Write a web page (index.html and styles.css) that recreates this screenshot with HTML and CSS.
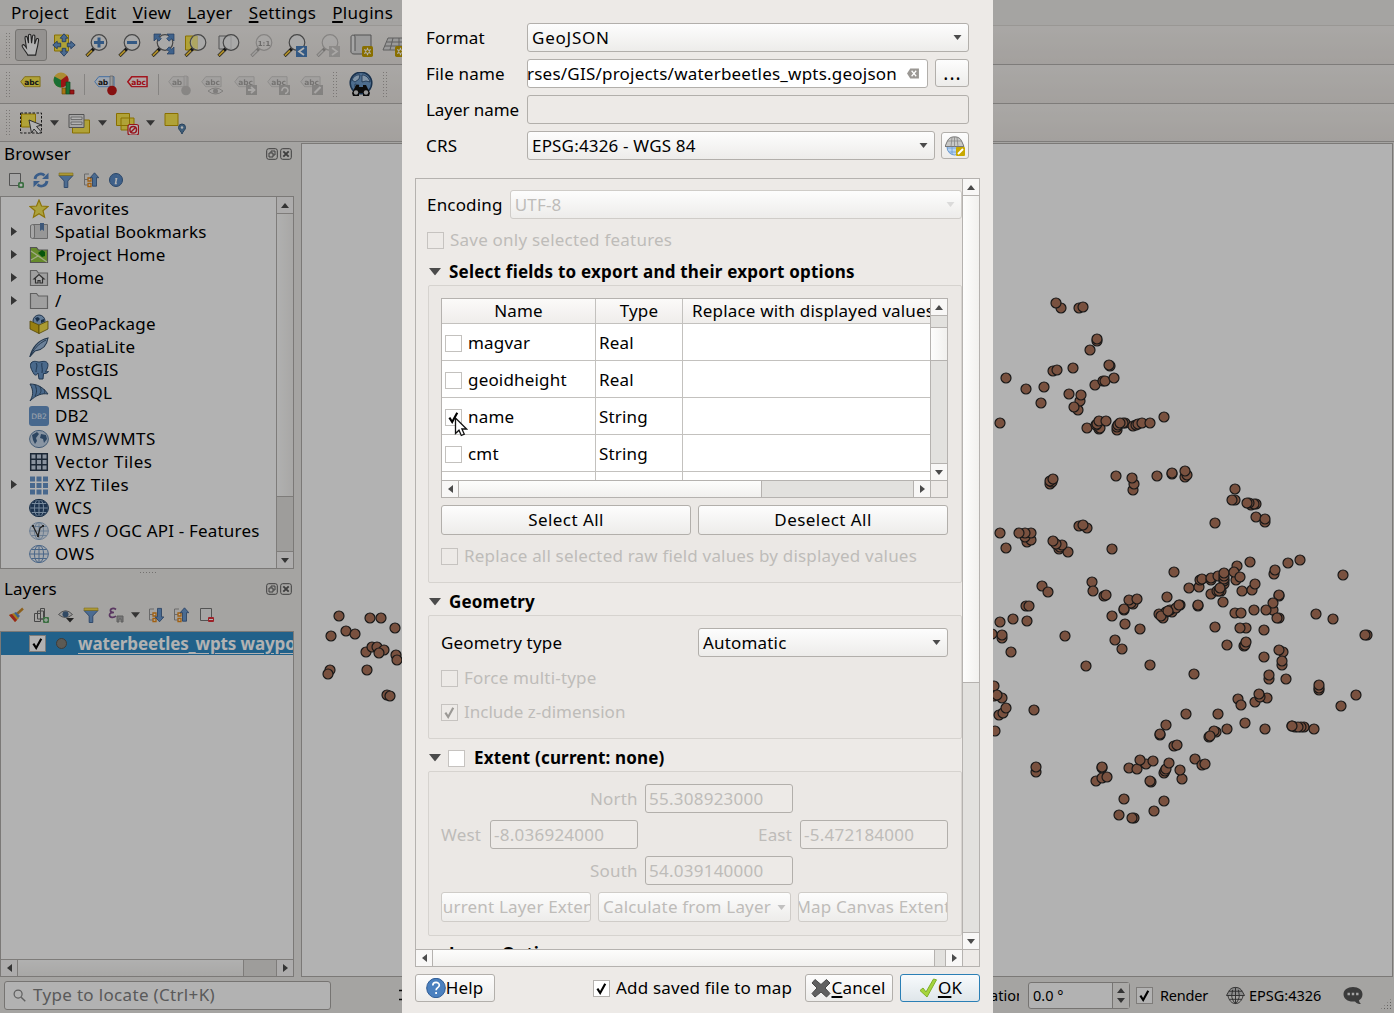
FILE: index.html
```html
<!DOCTYPE html>
<html lang="en">
<head>
<meta charset="utf-8">
<title>QGIS - Save Vector Layer as</title>
<link rel="stylesheet" href="styles.css">
</head>
<body>
<svg class="defs" aria-hidden="true">
  <defs>
    <symbol id="lens" viewBox="0 0 24 24"><path d="M9 15.5 1.5 23" stroke="#222" stroke-width="3.2"/><path d="M7 17.5 1.8 22.6" stroke="#f5c73a" stroke-width="2"/><circle cx="14" cy="9.5" r="7.8" fill="#f4f4f4" fill-opacity=".75" stroke="#666" stroke-width="1.2"/></symbol>
    <symbol id="up" viewBox="0 0 8 5"><path d="M0 5 4 0l4 5z" fill="#4b4b4b"/></symbol>
    <symbol id="down" viewBox="0 0 8 5"><path d="M0 0h8L4 5z" fill="#4b4b4b"/></symbol>
    <symbol id="left" viewBox="0 0 5 8"><path d="M5 0v8L0 4z" fill="#4b4b4b"/></symbol>
    <symbol id="right" viewBox="0 0 5 8"><path d="M0 0v8l5-4z" fill="#4b4b4b"/></symbol>
    <symbol id="check" viewBox="0 0 14 16"><path d="M2.6 8.2 5.6 12.8 11 3" fill="none" stroke="currentColor" stroke-width="2.3"/></symbol>
    <symbol id="tag" viewBox="0 0 22 12"><path d="M5 .7h16v10.6H5L.8 6z"/></symbol>
    <symbol id="folder" viewBox="0 0 20 20"><path d="M1.5 17.5v-15h6l2 2.5h9v12.5z" fill="#e6e6e6" stroke="#8a8a8a" stroke-width="1.2"/></symbol>
    <symbol id="globe" viewBox="0 0 20 20"><ellipse cx="10" cy="10" rx="9.4" ry="8.6"/><ellipse cx="10" cy="10" rx="4.6" ry="8.6" fill="none"/><path d="M10 1.4v17.2M.6 10h18.8M2.3 5.5h15.4M2.3 14.5h15.4" fill="none"/></symbol>
    <symbol id="funnel" viewBox="0 0 16 16"><path d="M1 3.5h14L9.800 9v6.500h-3.600V9z" fill="#6d9bd0" stroke="#45699a"/><path d="M1 1h14v2.500H1z" fill="#f7dc4c" stroke="#b29a2a" stroke-width=".6"/></symbol>
    <symbol id="treeicon" viewBox="0 0 16 16"><path d="M6 2H1.500v11H6M1.500 7.500H6" fill="none" stroke="#999"/><path d="M5 6h3v3H5zM5 11.500h3v3H5z" fill="#fff" stroke="#e88a18" stroke-width="1.300"/></symbol>
    <symbol id="dockfloat" viewBox="0 0 12 12"><rect x=".7" y=".7" width="10.600" height="10.600" rx="2" fill="none" stroke="#5a5a5a"/><path d="M5 5V3h4v4H7M3 5h4v4H3z" fill="none" stroke="#5a5a5a"/></symbol>
    <symbol id="dockclose" viewBox="0 0 12 12"><rect x=".7" y=".7" width="10.600" height="10.600" rx="2" fill="none" stroke="#5a5a5a"/><path d="m3.300 3.300 5.400 5.400m0-5.400L3.300 8.700" stroke="#5a5a5a" stroke-width="1.900"/></symbol>
    <symbol id="badge" viewBox="0 0 10 10"><rect width="10" height="10" rx="1.500" fill="#c4a000"/><path d="M5 1.500v7M2 3.200l6 3.600M8 3.200 2 6.800" stroke="#fff" stroke-width="1.100"/><circle cx="5" cy="5" r="1.700" fill="#c4a000" stroke="#fff" stroke-width=".9"/></symbol>
  </defs>
</svg>

<div class="window">
  <nav class="menubar">
    <span>Pro<u>j</u>ect</span><span><u>E</u>dit</span><span><u>V</u>iew</span><span><u>L</u>ayer</span><span><u>S</u>ettings</span><span><u>P</u>lugins</span>
  </nav>

  <div class="toolbar">
    <i class="handle"></i>
    <span class="tool pressed"><svg viewBox="0 0 24 26"><path d="M8.500 24c-1-3-5-6.500-6-9.500-.6-2 1.500-2.500 2.600-1L7 16 5.500 5.500C5.300 3.300 7.600 3 8 5l1.300 6L9.200 3c0-2.200 2.600-2.200 2.800 0l.6 8 1-7.500c.3-2 2.700-1.700 2.600.3L16 12l1.700-5c.7-1.800 2.800-1 2.500.8-.5 3.700-1 7.500-2.200 11L17 24z" fill="#fff" stroke="#333" stroke-width="1.200"/></svg></span>
    <span class="tool"><svg viewBox="0 0 24 24"><path d="M2.500 2h14v16h-14z" fill="#fce94f" stroke="#c4a000"/><path d="m12 .8 3.800 4.400h-2v3.500h-3.600V5.200h-2zM12 23.200l3.800-4.400h-2v-3.500h-3.600v3.500h-2zM.8 12l4.400-3.800v2h3.500v3.600H5.200v2zM23.200 12l-4.400-3.800v2h-3.500v3.600h3.500v2z" fill="#6b9ad0" stroke="#335788" stroke-width=".9"/></svg></span>
    <span class="tool"><svg viewBox="0 0 24 24"><use href="#lens"/><path d="M14 4.500v10M9 9.500h10" stroke="#4a80bd" stroke-width="3"/></svg></span>
    <span class="tool"><svg viewBox="0 0 24 24"><use href="#lens"/><path d="M9 9.500h10" stroke="#4a80bd" stroke-width="3"/></svg></span>
    <span class="tool"><svg viewBox="0 0 24 24"><use href="#lens"/><path d="M3 1h7L7.800 3.200l2.500 2.500-2.500 2.500-2.500-2.500L3 8zM23 1h-7l2.200 2.200-2.500 2.500 2.500 2.500 2.500-2.500L23 8zM23 21h-7l2.200-2.200-2.500-2.500 2.500-2.500 2.500 2.500L23 14z" fill="#5b8dc7" stroke="#335788" stroke-width=".7"/></svg></span>
    <span class="tool"><svg viewBox="0 0 24 24"><path d="M1.500 3h12v14h-12z" fill="#fce94f" stroke="#c4a000"/><use href="#lens"/><path d="M13.500 3v13A6.500 6.500 0 0 1 8 7l1.500-4z" fill="#fce94f" opacity=".5"/></svg></span>
    <span class="tool"><svg viewBox="0 0 24 24"><path d="M2 3h12v13H2z" fill="#eee" stroke="#777"/><use href="#lens"/></svg></span>
    <span class="tool off"><svg viewBox="0 0 24 24"><use href="#lens"/><text x="14" y="12.500" class="onetoone">1:1</text></svg></span>
    <span class="tool"><svg viewBox="0 0 24 24"><use href="#lens"/><path d="M13 13h11v11H13z" fill="#4a80bd"/><path d="m21 15-5 3.500 5 3.500" fill="none" stroke="#fff" stroke-width="1.700"/></svg></span>
    <span class="tool off"><svg viewBox="0 0 24 24"><use href="#lens"/><path d="M13 13h11v11H13z" fill="#888"/><path d="m16 15 5 3.500-5 3.500" fill="none" stroke="#fff" stroke-width="1.700"/></svg></span>
    <span class="tool"><svg viewBox="0 0 24 24"><path d="M5 2h17v19H5c-2 0-3-1-3-2.500S3 17 5 17z" fill="#ddd" stroke="#777"/><path d="M2 18.500V4c0-2.500 4-2.500 4 0v14" fill="#eee" stroke="#777"/><use href="#badge" x="13" y="13" width="11" height="11"/></svg></span>
    <span class="tool"><svg viewBox="0 0 24 24"><path d="M6 5h17v12H1z" fill="#ddd" stroke="#888"/><path d="M4.500 9H23M3 13h20M11 5 8 17M17 5v12" stroke="#888"/><use href="#badge" x="13" y="13" width="11" height="11"/></svg></span>
  </div>

  <div class="toolbar">
    <i class="handle"></i>
    <span class="tool"><svg viewBox="0 0 24 24"><use href="#tag" x="1" y="4" width="21" height="11.500" fill="#fce94f" stroke="#b89c20"/><text x="12.500" y="12.500" class="abc">abc</text></svg></span>
    <span class="tool"><svg viewBox="0 0 24 24"><circle cx="9" cy="8" r="7.500" fill="#f7c948"/><path d="M9 8 2.500 4.500A7.500 7.500 0 0 0 9 15.500z" fill="#24a04a"/><path d="M9 8V15.500A7.500 7.500 0 0 0 15 3.500z" fill="#dc1f1f"/><path d="M10 16h4v6h-4z" fill="#f2a71b" stroke="#9c6a0a" stroke-width=".7"/><path d="M14 10h4v12h-4z" fill="#24a04a" stroke="#14692c" stroke-width=".7"/><path d="M18 18h4v4h-4z" fill="#dc1f1f" stroke="#8a1010" stroke-width=".7"/></svg></span>
    <i class="sep"></i>
    <span class="tool"><svg viewBox="0 0 24 24"><use href="#tag" x="1" y="4" width="21" height="11.500" fill="#e4eefb" stroke="#5a9be8"/><text x="10" y="12.500" class="abc">ab</text><path d="M17 4h3v12h-3z" fill="#ddd" stroke="#888" stroke-width=".7"/><circle cx="19" cy="18.500" r="4.800" fill="#c01818"/></svg></span>
    <span class="tool"><svg viewBox="0 0 24 24"><use href="#tag" x="1" y="4" width="21" height="11.500" fill="#fdecec" stroke="#e8202c" stroke-width="1.600"/><text x="12.500" y="12.500" class="abc red">abc</text></svg></span>
    <i class="sep"></i>
    <span class="tool off"><svg viewBox="0 0 24 24"><use href="#tag" x="1" y="4" width="21" height="11.500" fill="#ddd" stroke="#888"/><text x="10" y="12.500" class="abc">ab</text><path d="M17 4h3v12h-3z" fill="#ccc" stroke="#777" stroke-width=".7"/><circle cx="19" cy="18.500" r="4.800" fill="#777"/></svg></span>
    <span class="tool off"><svg viewBox="0 0 24 24"><use href="#tag" x="1" y="4" width="21" height="11.500" fill="#ddd" stroke="#888"/><text x="12.500" y="12.500" class="abc">abc</text><path d="M8 19q7.500-6 15 0-7.500 6-15 0z" fill="#eee" stroke="#555"/><circle cx="15.500" cy="19" r="2.500" fill="#555"/></svg></span>
    <span class="tool off"><svg viewBox="0 0 24 24"><use href="#tag" x="1" y="4" width="21" height="11.500" fill="#ddd" stroke="#888"/><text x="12.500" y="12.500" class="abc">abc</text><path d="M13 13h11v10H13z" fill="#666"/><path d="M15 18h6m-3-3 3.500 3-3.500 3" fill="none" stroke="#fff" stroke-width="1.800"/></svg></span>
    <span class="tool off"><svg viewBox="0 0 24 24"><use href="#tag" x="1" y="4" width="21" height="11.500" fill="#ddd" stroke="#888"/><text x="12.500" y="12.500" class="abc">abc</text><path d="M13 13h11v10H13z" fill="#666"/><path d="M16 19a3 3 0 1 1 3 2.500" fill="none" stroke="#fff" stroke-width="1.600"/></svg></span>
    <span class="tool off"><svg viewBox="0 0 24 24"><use href="#tag" x="1" y="4" width="21" height="11.500" fill="#ddd" stroke="#888"/><text x="12.500" y="12.500" class="abc">abc</text><path d="M13 13h11v10H13z" fill="#666"/><path d="m15.500 21 6-6" stroke="#fff" stroke-width="2.200"/></svg></span>
    <i class="handle wide"></i>
    <span class="tool"><svg viewBox="0 0 24 24"><circle cx="12" cy="11" r="10.800" fill="#6f9ccc" stroke="#26486f" stroke-width="1.500"/><path d="M3 8c2-4 5-5.500 8-5l-1 4-4 3zM13 3c4 0 7 3 8 7l-4-1-4 1zM6 12l4 1-1 4-3-2z" fill="#b9d4ee" stroke="#26486f" stroke-width=".8"/><path d="M7 13h3v2h4v-2h3l4 8-1 3h-6v-3h-4v3H4l-1-3z" fill="#111"/><circle cx="7" cy="20.500" r="2.200" fill="#ddd"/><circle cx="17" cy="20.500" r="2.200" fill="#ddd"/></svg></span>
    <i class="handle wide"></i>
  </div>

  <div class="toolbar">
    <i class="handle"></i>
    <span class="tool"><svg viewBox="0 0 24 24"><path d="M2.500 3h14v13h-14z" fill="#fce94f" stroke="#c4a000"/><path d="M1.500 2h21v20h-21z" fill="none" stroke="#222" stroke-dasharray="2.500 1.500"/><path d="m10 9 12.500 5-5 1.500 4.500 5-2.500 2.500-4.500-5-2.500 4z" fill="#fff" stroke="#444"/></svg></span>
    <svg class="menuarrow"><use href="#down"/></svg>
    <span class="tool"><svg viewBox="0 0 24 24"><path d="M5.500 9h17v13h-17z" fill="#fce94f" stroke="#c4a000"/><path d="M2 3.500h15v13H2z" fill="#eee" stroke="#777"/><path d="M4 6h11v2.500H4zM4 11h11v2.500H4z" fill="#fff" stroke="#888" stroke-width=".8"/></svg></span>
    <svg class="menuarrow"><use href="#down"/></svg>
    <span class="tool"><svg viewBox="0 0 24 24"><path d="M1.500 2.500h13v12h-13zM6 7h13v12H6z" fill="#fce94f" stroke="#c4a000"/><rect x="13" y="13.500" width="10.500" height="10.500" rx="2" fill="#fff" stroke="#d81f2a" stroke-width="1.200"/><circle cx="18.200" cy="18.700" r="3.300" fill="none" stroke="#d81f2a" stroke-width="1.500"/><path d="m16 21 4.500-4.500" stroke="#d81f2a" stroke-width="1.500"/></svg></span>
    <svg class="menuarrow"><use href="#down"/></svg>
    <span class="tool"><svg viewBox="0 0 24 24"><path d="M2 2.500h13v12H2z" fill="#fce94f" stroke="#c4a000"/><path d="M19 23c-1-3-3.500-4-3.500-6.500a3.500 3.500 0 0 1 7 0C22.500 19 20 20 19 23z" fill="#5b86ae" stroke="#3a5f85"/><circle cx="19" cy="16.500" r="1.200" fill="#fff"/></svg></span>
  </div>

  <div class="workspace">
    <aside class="docks">
      <section class="dock browser">
        <header><h2>Browser</h2><svg><use href="#dockfloat"/></svg><svg><use href="#dockclose"/></svg></header>
        <div class="docktools">
          <svg viewBox="0 0 16 16"><path d="M1.500 1.500h11v12h-11z" fill="#eee" stroke="#777"/><rect x="10" y="10" width="6" height="6" rx="1.500" fill="#57a05f"/><circle cx="13" cy="13" r="1.500" fill="#fff"/></svg>
          <svg viewBox="0 0 16 16"><path d="M2 7c.5-5 6.500-6.500 9.500-3.500M14 9c-.5 5-6.500 6.500-9.500 3.500" fill="none" stroke="#5386c4" stroke-width="2.800"/><path d="M15.500.8V7H9zM.5 15.200V9H7z" fill="#5386c4"/></svg>
          <svg><use href="#funnel"/></svg>
          <svg viewBox="0 0 16 16"><use href="#treeicon"/><path d="m11.500.8 4.300 4.900h-2.300v8.500h-4V5.700H7.200z" fill="#6b9ad0" stroke="#335788" stroke-width=".8"/></svg>
          <svg viewBox="0 0 16 16"><circle cx="8" cy="8" r="6.500" fill="#5b8bc6" stroke="#3c6597"/><path d="M9 3.800h.1M7.300 6.800h1.200l-1 4.700h1.300" fill="none" stroke="#fff" stroke-width="1.500"/></svg>
        </div>
        <div class="frame tree">
          <ul>
            <li><i></i><svg viewBox="0 0 20 20"><path d="m10 1 2.500 6 6.500.5-5 4.200 1.600 6.500L10 14.700l-5.600 3.500L6 11.700 1 7.500 7.500 7z" fill="#f7e95a" stroke="#c9a50a" stroke-width="1.200"/></svg><span>Favorites</span></li>
            <li><i class="arrow"></i><svg viewBox="0 0 20 20"><path d="M4 2.500h14.500v14H4z" fill="#d8d8d8" stroke="#999"/><path d="M1.500 15.500v-12q2-2 4 0v12q-2 2-4 0z" fill="#eee" stroke="#999"/><path d="M11 1h4v8l-2-1.500L11 9z" fill="#5a7fae"/></svg><span>Spatial Bookmarks</span></li>
            <li><i class="arrow"></i><svg viewBox="0 0 20 20"><path d="M1.500 17.500v-15h6l2 2.500h9v12.500z" fill="#92c83e" stroke="#777" stroke-width="1.200"/><path d="M2 6l16 11M2 15l7-4" stroke="#e8f4c0" stroke-width="1.300"/><path d="m13 5 3 2v4l-3 1-4-4z" fill="#0a7a12"/></svg><span>Project Home</span></li>
            <li><i class="arrow"></i><svg viewBox="0 0 20 20"><use href="#folder"/><path d="m5 11 5-4.500 5 4.500h-1.500v4H11v-2.500H9V15H6.500v-4z" fill="#f5f5f5" stroke="#444" stroke-width="1.200"/></svg><span>Home</span></li>
            <li><i class="arrow"></i><svg viewBox="0 0 20 20"><use href="#folder"/></svg><span>/</span></li>
            <li><i></i><svg viewBox="0 0 20 20"><circle cx="10" cy="7" r="6" fill="#8fb2d8" stroke="#2e4b6e"/><path d="M6 4l3-1 2 2-3 3zM12 6l3-1v3l-3 1z" fill="#26456b"/><path d="m1 7 9 4v8.500L1 15z" fill="#d9b71a" stroke="#7a6608" stroke-width=".8"/><path d="m19 7-9 4v8.500l9-4.500z" fill="#f5e04a" stroke="#7a6608" stroke-width=".8"/></svg><span>GeoPackage</span></li>
            <li><i></i><svg viewBox="0 0 20 20"><path d="M1 19.500C3 11 9 3 19 1c-1 7-5 12-13 13z" fill="#9bb9dc" stroke="#34506f" stroke-width="1.100"/><path d="M1 19.500C4 13 9 7 17 3" fill="none" stroke="#34506f"/></svg><span>SpatiaLite</span></li>
            <li><i></i><svg viewBox="0 0 20 20"><path d="M2 3c3-3 6-1 8-1s6-2 8.500 1c1.500 3-1 7-2 9l3-.5c-1 2-3 2-5 2L14 19h-4l-1-6c-1 2-3 3-4 1C2.500 10 .5 6 2 3z" fill="#6a97c8" stroke="#2e4e73"/><path d="M7 3c2 3 0 5 0 9M13 3c-1 3 1 5 0 10" fill="none" stroke="#2e4e73"/></svg><span>PostGIS</span></li>
            <li><i></i><svg viewBox="0 0 20 20"><path d="M1 1c7 0 13 3 18 10-6-1-12 1-18 7 3-5 4-10 0-17z" fill="#6a97c8" stroke="#34506f"/><path d="M6 2c2 4 2 8 0 11M10.500 3c2 3 2 6 0 8M15 6c1 2 1 3 0 4.500" fill="none" stroke="#34506f"/></svg><span>MSSQL</span></li>
            <li><i></i><svg viewBox="0 0 20 20"><rect width="20" height="20" rx="3" fill="#6795cb"/><text x="10" y="12.500" class="db2">DB2</text></svg><span>DB2</span></li>
            <li class="spread"><i></i><svg viewBox="0 0 20 20"><ellipse cx="10" cy="10" rx="9.400" ry="8.600" fill="#c4d6ea" stroke="#5f82a8"/><path d="M3 6l5-3 2 2-3 4 1 3-2 3-2-4zM12 5l5 1 1 4-3 4-1-4-3-1z" fill="#40648c"/></svg><span>WMS/WMTS</span></li>
            <li class="spread"><i></i><svg viewBox="0 0 20 20"><path d="M1.700 1.700h16.600v16.600H1.700z" fill="#c4d2e2"/><path d="M1.700 1.700h16.600v16.600H1.700zM7.200 1v18M12.800 1v18M1 7.200h18M1 12.800h18" fill="none" stroke="#28384c" stroke-width="1.500"/></svg><span>Vector Tiles</span></li>
            <li class="spread"><i class="arrow"></i><svg viewBox="0 0 20 20"><path d="M1 4h18M1 10.500h18M1 17h18" stroke="#6795cb" stroke-width="4.800" stroke-dasharray="5 1.500"/></svg><span>XYZ Tiles</span></li>
            <li class="spread"><i></i><svg viewBox="0 0 20 20" fill="#2a4a70" stroke="#a9c4e0"><use href="#globe"/><ellipse cx="10" cy="10" rx="9.400" ry="8.600" fill="none" stroke="#1f3d5f"/></svg><span>WCS</span></li>
            <li><i></i><svg viewBox="0 0 20 20" fill="#e4edf6" stroke="#8aa8ca" stroke-width=".8"><use href="#globe"/><path d="m4 5 5 10 2-8 3-2" fill="none" stroke="#333" stroke-width="1.300"/><path d="M3 4h2v2H3zM13 4h2v2h-2zM8 14h2v2H8z" fill="#333" stroke="none"/></svg><span>WFS / OGC API - Features</span></li>
            <li class="spread"><i></i><svg viewBox="0 0 20 20" fill="#eef4fa" stroke="#6a92c2"><use href="#globe"/></svg><span>OWS</span></li>
            <li><i></i><svg viewBox="0 0 20 20" fill="#5a86b5" stroke="#6a92c2"><use href="#globe"/></svg></li>
          </ul>
          <div class="vbar"><b><svg><use href="#up"/></svg></b><em style="flex:283"></em><s style="flex:54"></s><b class="end"><svg><use href="#down"/></svg></b></div>
        </div>
      </section>
      <i class="splitter"></i>
      <section class="dock layers">
        <header><h2>Layers</h2><svg><use href="#dockfloat"/></svg><svg><use href="#dockclose"/></svg></header>
        <div class="docktools">
          <svg viewBox="0 0 16 16"><path d="M9 7 15 1.500" stroke="#c98a2a" stroke-width="2.400"/><path d="m1 8 5-2 5 5-4 4z" fill="#f0b429"/><path d="m1 8 3-1 5 6-2 2z" fill="#d8372c"/><path d="m6 6 2-1 4 4-2 2z" fill="#5b8dc7"/></svg>
          <svg viewBox="0 0 16 16"><path d="M1.500 6.500h6v8h-6zM4.500 4h6v8h-6zM7.500 4V1.500h4V12h-4z" fill="none" stroke="#666"/><rect x="10" y="10" width="6" height="6" rx="1" fill="#57a05f"/><path d="M13 11v4M11 13h4" stroke="#fff"/></svg>
          <svg viewBox="0 0 16 16"><path d="M.5 7.500q7-7.500 14 0-7 6-14 0z" fill="#ddd" stroke="#777"/><circle cx="7.500" cy="7.300" r="3" fill="#47698f"/><path d="M8 11h8l-4 4.500z" fill="#333"/></svg>
          <svg><use href="#funnel"/></svg>
          <svg viewBox="0 0 16 16"><path d="M8 2.500C5.500.5 2 1.500 2.500 4c.3 1.500 2 1.500 3.500 1.500C3.500 5.500 1.500 6 1.500 8c0 3 4.500 3 6.500 1" fill="none" stroke="#81508c" stroke-width="1.700"/><path d="M9 9h6v6h-2v-3h-2v3H9z" fill="#aaa" stroke="#888"/></svg>
          <svg class="menuarrow"><use href="#down"/></svg>
          <svg viewBox="0 0 16 16"><use href="#treeicon"/><path d="m11.500 14.800 4.300-4.900h-2.300V1.400h-4v8.500H7.200z" fill="#6b9ad0" stroke="#335788" stroke-width=".8"/></svg>
          <svg viewBox="0 0 16 16"><use href="#treeicon"/><path d="m11.500.8 4.300 4.900h-2.300v8.500h-4V5.700H7.200z" fill="#6b9ad0" stroke="#335788" stroke-width=".8"/></svg>
          <svg viewBox="0 0 16 16"><path d="M2.500 1.500h11v12h-11z" fill="#eee" stroke="#777"/><rect x="10" y="10" width="6" height="5" rx="1" fill="#e0303a"/><path d="M11 12.500h4" stroke="#fff"/></svg>
        </div>
        <div class="frame layerlist">
          <div class="layerrow"><span class="cb"><svg><use href="#check"/></svg></span><i></i><strong>waterbeetles_wpts waypoints</strong></div>
          <div class="hbar"><b><svg><use href="#left"/></svg></b><em style="flex:226"></em><s style="flex:32"></s><b class="end"><svg><use href="#right"/></svg></b></div>
        </div>
      </section>
    </aside>
    <div class="gutter"></div>
    <main class="map"><svg id="canvas" viewBox="302 144 1090 833"></svg></main>
  </div>

  <footer class="status">
    <div class="locator"><svg viewBox="0 0 14 14"><circle cx="5.500" cy="5.500" r="4.300" fill="none" stroke="#888" stroke-width="1.300"/><path d="m8.800 8.800 4.400 4.400" stroke="#888" stroke-width="1.500"/></svg>Type to locate (Ctrl+K)</div>
    <svg class="extents" viewBox="0 0 12 12"><path d="M0 1.500h8v9H0" fill="none" stroke="#111" stroke-width="1.400"/></svg>
    <span class="rotlabel">Rotation</span>
    <div class="spin"><span>0.0 °</span><div><svg><use href="#up"/></svg><svg><use href="#down"/></svg></div></div>
    <span class="cb"><svg><use href="#check"/></svg></span><span class="render">Render</span>
    <svg class="proj" viewBox="0 0 20 20" fill="#c8c8c8" stroke="#444"><path d="M10 1.500c4 0 6 2 7 4l2.500 4.500H.5L3 5.500c1-2 3-4 7-4z"/><path d="M2 10c1 5 4 8.500 8 8.500s7-3.500 8-8.500M6 10c0 3 2 7 4 8.500 2-1.500 4-5.500 4-8.500M10 1.500v17M6 10l1-6M14 10l-1-6M3 5.500h14M4 14h12" fill="none"/></svg>
    <span class="epsg">EPSG:4326</span>
    <svg class="bubble" viewBox="0 0 20 20"><path d="M10 2c5.500 0 9.500 3 9.500 7.300 0 3-1.500 5-3.500 6 0 1.500 1 3 2 3.800-2.500 0-4.500-1-6-2.700-6 1-11.500-2-11.500-7.100C.5 5 4.500 2 10 2z" fill="#555"/><path d="M4.500 9h2.400M8.800 9h2.400M13.100 9h2.400" stroke="#eee" stroke-width="2.400"/></svg>
    <i class="grip"></i>
  </footer>
</div>

<div class="shade"></div>

<div class="dialog">
  <div class="form">
    <label>Format</label>
    <div class="combo geojson">GeoJSON<svg><use href="#down"/></svg></div>
    <label>File name</label>
    <div class="pair"><div class="edit file"><span>rses/GIS/projects/waterbeetles_wpts.geojson</span><svg viewBox="0 0 14 12"><path d="M4 .5h9.500v11H4L.5 6z" fill="#9b9894"/><path d="m5.500 3 5 6m0-6-5 6" stroke="#fff" stroke-width="1.300"/></svg></div><button class="btn dots">...</button></div>
    <label class="tight">Layer name</label>
    <div class="edit off"></div>
    <label>CRS</label>
    <div class="pair crs"><div class="combo">EPSG:4326 - WGS 84<svg><use href="#down"/></svg></div><button class="btn"><svg viewBox="0 0 20 20"><ellipse cx="9.500" cy="11" rx="7.500" ry="8" fill="#b8d4f2" stroke="#6c9bd0"/><path d="M2 12h15M4 16h11M7 11v7M12 11v7" stroke="#6c9bd0" stroke-width=".8"/><path d="M9.500.8c4 0 6 2 7 4l2.500 5.700H0l2.500-5.700c1-2 3-4 7-4z" fill="#c8c8c6" stroke="#777"/><path d="M2.500 5h14M6 10.500 7 1.500M13 10.500 12 1.500M9.500 1v9.500" stroke="#888" stroke-width=".8"/><rect x="11" y="11" width="9" height="9" rx="1" fill="#c8a800"/><path d="m13 18 5-5" stroke="#fff" stroke-width="2"/></svg></button></div>
  </div>

  <div class="scroller">
    <div class="viewport">
      <div class="encoding"><label>Encoding</label><div class="combo off">UTF-8<svg><use href="#down"/></svg></div></div>
      <div class="checkrow savesel off"><span class="cb"></span>Save only selected features</div>

      <h3 class="first"><svg><use href="#down"/></svg>Select fields to export and their export options</h3>
      <div class="group">
        <div class="table">
          <div class="cells">
            <div class="row head"><span>Name</span><span>Type</span><span>Replace with displayed values</span></div>
            <div class="row"><span><i class="cb"></i>magvar</span><span>Real</span><span></span></div>
            <div class="row"><span><i class="cb"></i>geoidheight</span><span>Real</span><span></span></div>
            <div class="row"><span><i class="cb"><svg><use href="#check"/></svg></i>name</span><span>String</span><span></span></div>
            <div class="row"><span><i class="cb"></i>cmt</span><span>String</span><span></span></div>
            <div class="row"><span></span><span></span><span></span></div>
          </div>
          <div class="vbar"><b><svg><use href="#up"/></svg></b><s style="flex:11"></s><em class="mid" style="flex:33"></em><s style="flex:105"></s><b class="end"><svg><use href="#down"/></svg></b></div>
          <div class="hbar"><b><svg><use href="#left"/></svg></b><em style="flex:303"></em><s style="flex:152"></s><b class="end"><svg><use href="#right"/></svg></b></div>
          <div class="corner"></div>
        </div>
        <div class="two"><button class="btn">Select All</button><button class="btn">Deselect All</button></div>
        <div class="checkrow off"><span class="cb"></span>Replace all selected raw field values by displayed values</div>
      </div>

      <h3><svg><use href="#down"/></svg>Geometry</h3>
      <div class="group">
        <div class="two"><label>Geometry type</label><div class="combo">Automatic<svg><use href="#down"/></svg></div></div>
        <div class="checkrow off"><span class="cb"></span>Force multi-type</div>
        <div class="checkrow next off"><span class="cb"><svg><use href="#check"/></svg></span>Include z-dimension</div>
      </div>

      <h3><svg><use href="#down"/></svg><span class="cb"></span>Extent (current: none)</h3>
      <div class="group extent">
        <div class="coord mid"><label>North</label><div class="edit off">55.308923000</div></div>
        <div class="coord"><label>West</label><div class="edit off">-8.036924000</div><label class="east">East</label><div class="edit off">-5.472184000</div></div>
        <div class="coord mid"><label>South</label><div class="edit off">54.039140000</div></div>
        <div class="three"><button class="btn"><span>Current Layer Extent</span></button><button class="btn calc">Calculate from Layer<svg><use href="#down"/></svg></button><button class="btn"><span>Map Canvas Extent</span></button></div>
      </div>
      <h3><svg></svg>Layer Options</h3>
    </div>
    <div class="vbar"><b><svg><use href="#up"/></svg></b><em style="flex:488"></em><s style="flex:250"></s><b class="end"><svg><use href="#down"/></svg></b></div>
    <div class="hbar"><b><svg><use href="#left"/></svg></b><em style="flex:503"></em><s style="flex:10"></s><b class="end"><svg><use href="#right"/></svg></b></div>
    <div class="corner"></div>
  </div>

  <div class="buttons">
    <button class="btn help"><svg viewBox="0 0 20 20"><ellipse cx="10" cy="10" rx="9.300" ry="9.700" fill="#4a80bf" stroke="#2c5a94"/><path d="M6.800 7.500c0-4 6.500-4 6.500-.3 0 2.500-3.200 2.500-3.200 5M10.100 14v2" fill="none" stroke="#fff" stroke-width="1.700"/></svg>Help</button>
    <span class="cb"><svg><use href="#check"/></svg></span><span class="addmap">Add saved file to map</span>
    <button class="btn cancel"><svg viewBox="0 0 20 20"><path d="M4 1.500 10 6.500l5.500-5L19 5l-5 5 5 5.500-3.500 3.500-5.500-5-6 5L1 15.500 6 10 1 5z" fill="#606060" stroke="#484848"/></svg><span><u>C</u>ancel</span></button>
    <button class="btn ok"><svg viewBox="0 0 20 20"><path d="M2 12.500 5 10l3 4L15.500 1l3 .8L9 19z" fill="#a6d53c" stroke="#7fae2a"/></svg><span><u>O</u>K</span></button>
  </div>
</div>

<svg class="cursor" viewBox="0 0 14 20"><path d="M1.500 1v15.500l3.500-3.300 2.300 5.300 3-1.300-2.400-5.200h4.700z" fill="#fff" stroke="#111" stroke-width="1.300"/></svg>
<script src="map.js"></script>
</body>
</html>
```
FILE: styles.css
```css
* { box-sizing: border-box; }
body {
  margin: 0; width: 1394px; height: 1013px; overflow: hidden; position: relative;
  font: 17px/22px "Noto Sans", "Open Sans", sans-serif; letter-spacing: .18px; color: #000;
  background: #edeae7;
}
svg { display: block; flex: none; }
.defs { position: absolute; width: 0; height: 0; }
h2, h3, ul { margin: 0; padding: 0; }
u { text-decoration-thickness: 2px; text-underline-offset: 2px; }

/* main window */
.window { width: 1394px; height: 1013px; display: flex; flex-direction: column; background: #edebe8; }
.menubar { height: 26px; display: flex; gap: 16px; padding: 2px 0 0 11px; border-bottom: 1px solid #dcd9d5; letter-spacing: .34px; }
.toolbar { height: 39px; display: flex; align-items: center; background: linear-gradient(#f3f0ed, #eae6e2); border-bottom: 1px solid #b5b2af; }
.toolbar:nth-of-type(3) { height: 38px; }
.handle { width: 14px; height: 27px; background: radial-gradient(circle, #b0adaa .6px, transparent 1px) 5px 0 / 3px 3px repeat-y, radial-gradient(circle, #b0adaa .6px, transparent 1px) 8px 0 / 3px 3px repeat-y; }
.handle.wide { width: 17px; margin: 0; }
.sep { width: 8px; height: 21px; background: linear-gradient(#c0bdba, #c0bdba) 4px 0 / 1px 100% no-repeat; }
.tool { width: 33px; height: 32px; display: grid; place-items: center; }
.tool svg { width: 24px; height: 24px; }
.tool.pressed { width: 32px; margin: 0 0 0 1px; background: #d4d2cf; border: 1px solid #a9a6a3; border-radius: 3px; }
.tool.off { filter: grayscale(1); opacity: .35; }
.menuarrow { width: 9px !important; height: 6px !important; margin: 0 3px; }
.abc { font: bold 7.500px "DejaVu Sans", sans-serif; text-anchor: middle; letter-spacing: -.2px; fill: #222; }
.abc.red { fill: #e01020; }
.onetoone { font: bold 7px "DejaVu Sans", sans-serif; text-anchor: middle; letter-spacing: 0; }
.db2 { font: 7.500px "DejaVu Sans", sans-serif; text-anchor: middle; fill: #e4edf8; letter-spacing: 0; }

.workspace { flex: 1; display: flex; min-height: 0; }
.docks { width: 294px; display: flex; flex-direction: column; }
.dock header { display: flex; align-items: center; gap: 2px; padding: 0 2px 0 4px; height: 24px; }
.dock header h2 { font-size: 17px; font-weight: 400; flex: 1; }
.dock header svg { width: 12px; height: 12px; }
.docktools { height: 28px; margin-bottom: 2px; padding: 0 8px; display: flex; align-items: center; gap: 9px; }
.docktools svg { width: 16px; height: 16px; }
.docktools .menuarrow { margin: 0 -2px 0 -2px; }
.layers .docktools > .menuarrow ~ svg { transform: translateX(1px); }
.frame { background: #fff; border: 1px solid #b0aeab; }
.tree { height: 373px; display: flex; overflow: hidden; }
.tree ul { flex: 1; list-style: none; overflow: hidden; }
.tree li { height: 23px; display: flex; align-items: center; }
.tree li.spread { letter-spacing: .5px; }
.tree li i { width: 28px; height: 9px; }
.tree li i.arrow { background: #4b4b4b; clip-path: polygon(10px 0, 16px 4.500px, 10px 100%); }
.tree li svg { width: 20px; height: 20px; margin-right: 6px; }
.layers { flex: 1; display: flex; flex-direction: column; }
.layerlist { flex: 1; display: flex; flex-direction: column; }
.layerrow { height: 23px; margin-bottom: auto; display: flex; align-items: center; background: #308cc6; overflow: hidden; }
.layerrow .cb { margin-left: 28px; }
.layerrow i { width: 11px; height: 11px; border-radius: 50%; background: #858179; border: 1px solid #5a5650; margin: 0 11px 0 10px; flex: none; }
.layerrow strong { color: #fff; text-decoration: underline; text-underline-offset: 3px; letter-spacing: -.12px; white-space: nowrap; }
.splitter { height: 8px; width: 18px; margin-left: 139px; background: radial-gradient(circle, #a5a29f .6px, transparent 1px) 0 2px / 3px 3px repeat-x; }
.gutter { width: 7px; }
.map { flex: 1; background: #fff; border: 1px solid #b0aeab; margin-top: 1px; overflow: hidden; margin-right: 1px; }
.map svg { width: 1090px; height: 833px; }
.map circle { fill: #ae755b; stroke: #232323; stroke-width: 1.200; }

/* scroll bars */
.vbar, .hbar { display: flex; background: #e2e1de; }
.vbar { width: 17px; flex-direction: column; border-left: 1px solid #b5b2af; }
.hbar { height: 17px; border-top: 1px solid #b5b2af; }
.vbar b, .hbar b { display: grid; place-items: center; background: #f8f7f6; flex: none; }
.vbar b { height: 17px; border-bottom: 1px solid #b5b2af; }
.hbar b { width: 17px; border-right: 1px solid #b5b2af; }
.vbar b.end { border: 0; border-top: 1px solid #b5b2af; }
.hbar b.end { border: 0; border-left: 1px solid #b5b2af; }
.vbar b svg { width: 8px; height: 5px; }
.hbar b svg { width: 5px; height: 8px; }
.vbar em { background: linear-gradient(90deg, #fdfdfc, #f1f0ee); border-bottom: 1px solid #b5b2af; }
.vbar em.mid { border-top: 1px solid #b5b2af; }
.hbar em { background: linear-gradient(#fdfdfc, #f1f0ee); border-right: 1px solid #b5b2af; }

/* status bar */
.status { height: 36px; display: flex; align-items: center; padding-left: 4px; }
.locator { width: 327px; height: 29px; border: 1px solid #aaa7a4; border-radius: 3px; background: #fff; color: #818181; display: flex; align-items: center; padding-left: 8px; gap: 7px; letter-spacing: .33px; }
.locator svg { width: 13px; height: 13px; }
.extents { width: 12px; height: 12px; margin-left: 68px; }
.rotlabel { margin-left: 556px; width: 52px; overflow: hidden; font-size: 14.500px; letter-spacing: 0; }
.spin { margin-left: 9px; width: 102px; height: 27px; border: 1px solid #aaa7a4; border-radius: 3px; background: #fff; display: flex; font-size: 14.500px; line-height: 25px; letter-spacing: 0; }
.spin span { flex: 1; padding-left: 4px; }
.spin div { width: 17px; border-left: 1px solid #aaa7a4; display: flex; flex-direction: column; justify-content: space-evenly; align-items: center; background: #f4f2f0; }
.spin svg { width: 8px; height: 5px; }
.spin + .cb { margin-left: 6px; }
.render { width: 49px; margin-left: 7px; font-size: 14.500px; letter-spacing: -.2px; }
.proj { width: 19px; height: 19px; margin: 0 4px 0 17px; }
.epsg { font-size: 14.500px; letter-spacing: 0; width: 73px; }
.bubble { width: 20px; height: 20px; margin-left: 21px; }
.grip { width: 12px; height: 12px; margin: 18px 2px 0 auto; background: radial-gradient(circle, #8f8c89 .6px, transparent 1px) 0 0 / 3px 3px; clip-path: polygon(100% 0, 100% 100%, 0 100%); }

.cb { width: 17px; height: 17px; border: 1px solid #b5b2af; background: #fff; display: inline-block; flex: none; }
.cb svg { width: 15px; height: 15px; }

/* modal shade and dialog */
.shade { position: absolute; inset: 0; background: rgba(0, 0, 0, .3); }
.dialog { position: absolute; left: 402px; top: 0; width: 591px; height: 1013px; background: #edeae7; padding: 23px 13px 0; display: flex; flex-direction: column; }
.form { display: grid; grid-template-columns: 94px 442px; column-gap: 7px; row-gap: 7px; padding-left: 11px; }
label { line-height: 29px; white-space: nowrap; }
label.tight { letter-spacing: -.07px; }
.combo, .edit { height: 29px; border: 1px solid #b2afab; border-radius: 3px; line-height: 27px; white-space: nowrap; }
.combo { background: linear-gradient(#fdfdfd, #edecea); padding: 0 6px 0 4px; display: flex; align-items: center; justify-content: space-between; }
.combo svg { width: 9px; height: 5px; }
.geojson { letter-spacing: .75px; }
.edit { background: #fff; padding-left: 3px; }
.edit.off { background: #edeae7; }
.pair { display: flex; justify-content: space-between; }
.file { width: 401px; padding: 0; display: flex; align-items: center; }
.file span { width: 371px; letter-spacing: .22px; margin-left: -1px; }
.file svg { width: 14px; height: 11px; margin-left: 8px; }
.btn { font: inherit; letter-spacing: inherit; color: inherit; padding: 0; border: 1px solid #b2afab; border-radius: 3px; background: linear-gradient(#fdfdfd, #edecea); display: flex; align-items: center; justify-content: center; white-space: nowrap; overflow: hidden; }
.dots { width: 34px; height: 28px; font-size: 19px; letter-spacing: 1px; padding-left: 1px; }
.crs .combo { width: 408px; }
.crs .btn { width: 28px; height: 27px; margin-top: 1px; }
.crs .btn svg { width: 20px; height: 20px; }

.scroller { margin-top: 18px; height: 789px; border: 1px solid #b5b2af; display: grid; grid-template: 770px 17px / 546px 17px; }
.viewport { overflow: hidden; padding: 11px 0 0 11px; }
.encoding { display: flex; gap: 7px; }
.encoding .combo { flex: 1; }
.off, .extent { color: #bebcb9; }
.combo.off { border-color: #cfccc8; }
.combo.off svg { opacity: .15; }
.checkrow { height: 24px; display: flex; align-items: center; gap: 6px; margin-top: 9px; white-space: nowrap; }
.checkrow.savesel { letter-spacing: .22px; }
.checkrow.off .cb { background: #edeae7; border-color: #c6c3c0; color: #9b9995; }
.checkrow.next { margin-top: 10px; letter-spacing: 0; }
h3 { font-size: 17px; font-weight: 700; height: 24px; margin: 7px 0 1px 2px; display: flex; align-items: center; white-space: nowrap; }
h3.first { margin-top: 8px; letter-spacing: .22px; }
h3 > svg { width: 12px; height: 7.500px; margin-right: 8px; }
h3 .cb { margin: 0 9px 0 -1px; border-color: #c6c3c0; }
.group { margin-left: 1px; border: 1px solid #d6d3cf; border-radius: 2px; background: #ebe8e5; padding: 12px 13px 14px 12px; }
.table { height: 200px; border: 1px solid #b5b2af; display: grid; grid-template: 181px 17px / 488px 17px; background: #fff; }
.cells { overflow: hidden; }
.row { display: grid; grid-template-columns: 154px 87px 248px; height: 37px; border-bottom: 1px solid #c3c1be; line-height: 36px; }
.row span { display: flex; align-items: center; padding: 1px 0 0 3px; border-right: 1px solid #c3c1be; white-space: nowrap; }
.row span:last-child { border: 0; }
.row .cb { margin: 0 6px 0 0; border-color: #c3c1be; }
.row.head { height: 25px; line-height: 24px; background: linear-gradient(#fbfaf9, #efedeb); }
.row.head span { justify-content: center; padding: 0; }
.row.head span:last-child { justify-content: flex-start; padding-left: 9px; }
.corner { background: #edeae7; border: solid #b5b2af; border-width: 1px 0 0 1px; }
.two { display: grid; grid-template-columns: 250px 250px; gap: 7px; }
.table + .two { margin-top: 7px; }
.two .btn { height: 30px; letter-spacing: .45px; }
.extent { padding-bottom: 13px; display: grid; gap: 7px; }
.coord { display: flex; }
.coord label { width: 49px; }
.coord .edit { width: 148px; letter-spacing: .25px; }
.coord .east { margin-left: auto; width: 42px; }
.coord.mid { padding-left: 149px; }
.coord.mid label { width: 55px; }
.three { display: grid; grid-template-columns: 150px 193px 150px; gap: 7px; }
.three .btn { height: 30px; border-color: #cfccc8; }
.three .calc svg { width: 9px; height: 5px; opacity: .3; margin-left: 6px; }
.extent + h3 { margin-top: 6px; }

.buttons { display: flex; align-items: center; margin-top: 7px; height: 28px; }
.buttons .btn { height: 28px; }
.buttons .btn svg { width: 20px; height: 20px; }
.btn.help { width: 80px; padding-right: 1px; }
.buttons > .cb { margin-left: 98px; }
.addmap { margin-left: 6px; width: 175px; white-space: nowrap; }
.btn.cancel { margin-left: 14px; width: 88px; padding-right: 1px; }
.ok { margin-left: 7px; width: 80px; border-color: #2a7fb5; background: linear-gradient(#f7fafc, #dfe6ea); }
.cursor { position: absolute; left: 454px; top: 417px; width: 14px; height: 20px; }
```
FILE: map.js
```js
// Waypoints on the canvas, as x,y pairs in drawing order.
const points = `1061,308 1056,303 1079,308 1083,307 1097,341 1097,339 1090,350 1053,371 1057,370 1073,368 1110,366 1109,365
1006,378 1026,389 1044,387 1041,403 1095,385 1103,381 1105,381 1114,378 1069,394 1078,410 1080,401 1074,407 1081,395 1000,423
1087,428 1099,429 1100,428 1096,425 1097,424 1099,421 1106,421 1117,430 1117,427 1118,425 1125,423 1123,423 1120,423 1133,426
1136,425 1138,424 1142,423 1150,423 1164,417 1050,484 1052,482 1050,481 1053,479 1116,476 1133,490 1134,484 1132,478 1157,476
1172,474 1172,473 1000,533 1027,542 1031,540 1025,537 1031,533 1025,533 1019,533 1006,548 1079,526 1087,528 1083,525 1059,549
1068,552 1060,547 1062,545 1056,544 1053,541 1112,549 1185,477 1187,475 1185,471 1235,489 1235,500 1232,500 1251,505 1256,504
1254,504 1249,503 1247,503 1256,517 1265,522 1265,519 1215,523 1250,562 1237,566 1288,563 1300,560 1274,574 1275,570 1343,575
1189,588 1199,587 1200,580 1202,579 1211,580 1211,578 1218,576 1224,584 1224,581 1224,579 1224,576 1224,573 1211,594 1217,591
1221,591 1219,591 1220,588 1236,580 1234,572 1240,577 1242,591 1252,590 1255,584 1279,596 1279,595 1273,610 1273,603 1266,610
1254,610 1279,618 1277,618 1235,613 1241,613 1223,602 1198,606 1198,605 1180,605 1316,614 1333,619 1215,627 1246,628 1240,628
1264,630 1367,635 1365,635 1227,645 1244,646 1245,645 1246,642 1283,652 1279,650 1264,657 1282,665 1282,661 1286,679 1269,679
1269,675 1194,674 1319,690 1319,688 1319,685 1356,695 1341,706 1238,699 1241,705 1255,702 1267,698 1260,697 1259,694 1186,714
1218,714 1245,723 1265,729 1304,727 1292,726 1301,727 1295,727 1298,727 1292,726 1314,729 1227,729 1216,732 1214,731 1209,737
1210,736 1174,572 1092,582 1093,591 1104,596 1106,595 1133,604 1131,603 1129,600 1137,599 1124,610 1124,609 1112,616 1125,624
1140,629 1167,597 1163,618 1159,614 1166,612 1172,612 1170,610 1176,608 1179,605 1161,616 1168,611 1115,640 1122,649 1042,586
1048,592 1026,606 1029,606 1027,621 1013,619 1000,622 1002,638 1002,635 992,634 1011,652 1065,636 1086,666 1150,665 994,686
1002,698 994,696 997,695 999,715 1003,713 1006,708 1034,710 995,731 1036,772 1036,767 1102,768 1102,767 1096,781 1102,778
1107,777 1124,799 1119,815 1134,818 1132,818 1154,811 1164,801 1151,782 1150,781 1129,768 1137,769 1146,764 1140,760 1153,761
1166,725 1160,735 1160,734 1174,746 1177,745 1164,773 1165,771 1166,769 1169,763 1182,779 1180,770 1195,759 1202,765 1205,764
339,616 346,631 331,636 355,634 370,618 381,618 395,628 366,652 372,647 377,647 384,650 379,653 396,655 397,660 330,670 328,674
367,670 387,695 390,696`;
const canvas = document.getElementById('canvas');
for (const p of points.split(/\s+/)) {
  const [x, y] = p.split(',');
  const c = document.createElementNS('http://www.w3.org/2000/svg', 'circle');
  c.setAttribute('cx', x);
  c.setAttribute('cy', y);
  c.setAttribute('r', 5);
  canvas.append(c);
}
```
